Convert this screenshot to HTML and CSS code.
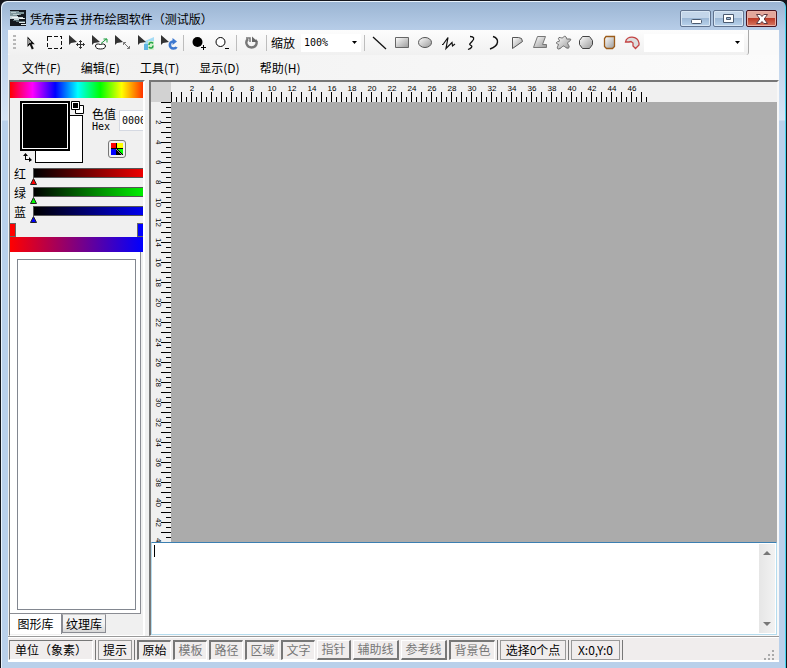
FILE: index.html
```html
<!DOCTYPE html>
<html lang="zh-CN">
<head>
<meta charset="utf-8">
<title>凭布青云 拼布绘图软件（测试版）</title>
<link rel="stylesheet" href="styles.css">
</head>
<body>
<div class="window">
  <header class="titlebar">
    <svg class="app-icon" width="16" height="16" viewBox="0 0 16 16" shape-rendering="crispEdges"><path fill="#15191f" d="M0 0h16v16H0z"/><path fill="#7f979b" d="M0 1h9v1h5v2h-3v1H7v1H0z"/><path fill="#b9cccd" d="M1 2h5v1H1zM3 4h6v1H3z"/><path fill="#c9d8d9" d="M0 6h8v1h5v1h2v1H9v1H4V9H0z"/><path fill="#f2f6f6" d="M2 7h6v1H2zM10 8h4v1h-4z"/><path fill="#5d7076" d="M3 10h6v1h6v2h-4v-1H6v-1H3z"/><path fill="#dfe7e8" d="M9 12h6v1H9zM11 14h5v1h-5z"/></svg>
    <h1 class="title">凭布青云 拼布绘图软件（测试版）</h1>
    <div class="caption-buttons">
      <button class="caption" aria-label="最小化"><svg width="12" height="12" viewBox="0 0 12 12"><rect x="1.500" y="6.500" width="10" height="4" rx="1" fill="#fff" stroke="#4b5a70"/></svg></button>
      <button class="caption" aria-label="最大化"><svg width="12" height="12" viewBox="0 0 12 12"><path fill="#fff" stroke="#4b5a70" fill-rule="evenodd" d="M.500 1.500h10v8H.500zM3.500 4.500h4v2h-4z"/></svg></button>
      <button class="caption close" aria-label="关闭"><svg width="14" height="12" viewBox="0 0 14 12"><path d="M1.500 1.500h3.700L7 3.500l1.800-2h3.700L9.200 6l3.300 4.500H8.800L7 8.500l-1.800 2H1.500L4.800 6z" fill="#fff" stroke="#5b3840"/></svg></button>
    </div>
  </header>

  <div class="client">
    <div class="toolbar-row">
      <div class="toolbar">
        <span class="grip"></span>
        <button class="tool" aria-label="选择"><svg viewBox="0 0 18 18"><path d="M5.500 2.500v10.500l2.300-2.200 2 4.700 2-1-2.100-4.300h3.100z" fill="#111"/><path d="M6.500 5v5M7.500 6v3M8.500 7v2" stroke="#999"/></svg></button>
        <button class="tool" aria-label="框选"><svg viewBox="0 0 18 18" shape-rendering="crispEdges"><path d="M2.500 2.500h14v12h-14z" fill="none" stroke="#111" stroke-dasharray="4 2"/></svg></button>
        <button class="tool" aria-label="移动"><svg viewBox="0 0 18 18"><path d="M1 1v10l2-2 6-1z" fill="#333"/><path d="M12.500 6.500v8M8.500 10.500h8M11 8l1.500-1.500L14 8M11 13l1.500 1.500L14 13M10 9l-1.500 1.500L10 12M15 9l1.500 1.500L15 12" fill="none" stroke="#333"/></svg></button>
        <button class="tool" aria-label="变形"><svg viewBox="0 0 18 18"><path d="M1 1v10l2-2 6-1z" fill="#333"/><path d="M4.500 12c0-2 2-2.500 5-1.500 2-1 5-.5 5 1.500s-2 3-5 3-5-1-5-3z" fill="#fff" stroke="#111"/><path d="M10 9.500L15.500 5m-3 0h3.500v3.500" fill="none" stroke="#159b38"/></svg></button>
        <button class="tool" aria-label="缩放对象"><svg viewBox="0 0 18 18"><path d="M1 1v10l2-2 6-1z" fill="#333"/><path d="M9.500 8.500l6 6M9.500 11V8.500H12M13 14.500h2.500V12" fill="none" stroke="#777"/></svg></button>
        <button class="tool" aria-label="翻转"><svg viewBox="0 0 18 18"><path d="M8 7l9-4v13H7z" fill="#a4dcf5"/><path d="M7 10h4v6H7z" fill="#5fb6e4"/><path d="M1 1v10l2-2 6-1z" fill="#333"/><path d="M11 7h6v9h-6z" fill="#d5f2cf"/><path d="M12 11c0-3 3-3 4-1.500M16 11.500c0 3-3 3-4 1.500" fill="none" stroke="#28a548" stroke-width="1.600"/></svg></button>
        <button class="tool" aria-label="旋转对象"><svg viewBox="0 0 18 18"><path d="M1 1v10l2-2 6-1z" fill="#333"/><path d="M13 7.500c-4 0-4.500 7 .5 7 1.500 0 2.500-.5 3-1.500" fill="none" stroke="#3d78cf" stroke-width="2.600"/><path d="M12.500 4l4.500 3.500-4.500 3.500z" fill="#3d78cf"/></svg></button>
        <span class="sep"></span>
        <button class="tool" aria-label="放大"><svg viewBox="0 0 18 18"><circle cx="7.500" cy="8" r="5"/><path d="M11 13.500h5M13.500 11v5" stroke="#000"/></svg></button>
        <button class="tool" aria-label="缩小"><svg viewBox="0 0 18 18"><circle cx="7.500" cy="8" r="4.500" fill="#fff" stroke="#000"/><path d="M12 14.500h4" stroke="#000"/></svg></button>
        <span class="sep"></span>
        <button class="tool" aria-label="重置"><svg viewBox="0 0 18 18"><path d="M5 5C1.500 8 4 13.500 8.500 13.500S15 9 12.500 6" fill="none" stroke="#777" stroke-width="2.400"/><path d="M9 2.500v5.500h6z" fill="#666"/><path d="M3 4h4v4" fill="none" stroke="#777" stroke-width="1.500"/></svg></button>
        <span class="sep"></span>
        <label class="zoom-label" for="zoom">缩放</label>
        <select class="combo zoom" id="zoom"><option>100%</option></select>
        <span class="sep"></span>
        <button class="tool" aria-label="直线"><svg viewBox="0 0 18 18"><path d="M2 3l13 12" stroke="#111" stroke-width="1.300"/></svg></button>
        <button class="tool" aria-label="矩形"><svg viewBox="0 0 18 18"><defs><linearGradient id="g" x1="0" y1="0" x2="1" y2="1"><stop stop-color="#fff"/><stop offset="1" stop-color="#999"/></linearGradient></defs><path d="M1.500 3.500h13v10h-13z" fill="url(#g)" stroke="#666"/></svg></button>
        <button class="tool" aria-label="椭圆"><svg viewBox="0 0 18 18"><ellipse cx="8" cy="8.500" rx="6.500" ry="5" fill="url(#g)" stroke="#555"/></svg></button>
        <button class="tool" aria-label="折线"><svg viewBox="0 0 18 18"><path d="M2 10.500h1L8 3.500l-2 11 6-6 .5 3.500 2.500-2" fill="none" stroke="#111" stroke-width="1.200"/></svg></button>
        <button class="tool" aria-label="曲线"><svg viewBox="0 0 18 18"><path d="M7 2.500c4 0 5 2 2 5s-3 3-1 4 0 3-3 4" fill="none" stroke="#111" stroke-width="1.300"/></svg></button>
        <button class="tool" aria-label="弧线"><svg viewBox="0 0 18 18"><path d="M7 2.500c6 2 7 9-3 12.500" fill="none" stroke="#111" stroke-width="1.400"/></svg></button>
        <button class="tool" aria-label="扇形"><svg viewBox="0 0 18 18"><path d="M3.500 3.500h6l3 1 1 3-10 7z" fill="url(#g)" stroke="#555"/></svg></button>
        <button class="tool" aria-label="多边形"><svg viewBox="0 0 18 18"><path d="M5.500 2.500h8l-3 8h4v3h-13z" fill="url(#g)" stroke="#777"/></svg></button>
        <button class="tool" aria-label="曲边形"><svg viewBox="0 0 18 18"><path d="M4 3.500c2 0 3 1 4 0s2-2 3-.5 0 2 1 2h3.500c1 2-3 3-3 4s3 4 1 5-4-2-5-2-3 3-5 3-1-3 0-4-3-1-2-2.500 3-.5 3-1.500-2-2.500-.5-3.500z" fill="url(#g)" stroke="#666"/></svg></button>
        <button class="tool" aria-label="正多边形"><svg viewBox="0 0 18 18"><path d="M4.500 2.500h7l3 4v4l-3 4h-7l-3-4v-4z" fill="url(#g)" stroke="#444"/></svg></button>
        <button class="tool" aria-label="圆角矩形"><svg viewBox="0 0 18 18"><path d="M5 2.500h8.500v10l-2 2h-6l-2-2v-8z" fill="url(#g)" stroke="#9b5b19" stroke-width="1.300"/></svg></button>
        <button class="tool" aria-label="扇环"><svg viewBox="0 0 18 18"><path d="M1.500 8c1-6.500 12-7 13.500 1v2l-3.500 3.500-2.500-2.500V9L7 7.500 5 8z" fill="#ddd" stroke="#c44343" stroke-width="1.300"/></svg></button>
        <select class="combo style" aria-label="线型"><option></option></select>
      </div>
    </div>
    <nav class="menu">
      <button>文件(F)</button><button>编辑(E)</button><button>工具(T)</button><button>显示(D)</button><button>帮助(H)</button>
    </nav>

    <main class="main">
      <aside class="side">
        <div class="hue"></div>
        <div class="picker">
          <div class="swatches">
            <span class="swatch back"></span>
            <span class="swatch front"></span>
            <svg class="default" width="13" height="13" viewBox="0 0 13 13"><path d="M4.500 4.500h8v8h-8z" fill="#fff" stroke="#000"/><path d="M.500.500h8v8h-8z" fill="#fff" stroke="#000"/><path d="M2 2h5v5H2z"/></svg>
            <svg class="swap" width="9" height="9" viewBox="0 0 9 9"><path d="M2.500 0L5 3H3v3h3V4l3 3-3 2V7H2V3H0z"/></svg>
          </div>
          <div class="hex">
            <label class="hex-label" for="hex"><span>色值</span><span class="hex-word">Hex</span></label>
            <input id="hex" class="hex-input" value="000000">
            <button class="palette" aria-label="调色板"><svg width="12" height="12" viewBox="0 0 12 12" shape-rendering="crispEdges"><path d="M0 0h12v12H0z"/><path fill="#f00" d="M0 0h5v5H0z"/><path fill="#ff0" d="M6 0h6v5H6z"/><path fill="#00f" d="M0 6h5v6H0z"/><path fill="#0f0" d="M6 6h6v6z"/><path fill="#999" d="M4 6h2l5 6z"/></svg></button>
          </div>
        </div>
        <div class="channels">
          <div class="channel"><span>红</span><div class="track red"></div><svg class="thumb" viewBox="0 0 7 7"><path d="M3.500.5l3 6h-6z" fill="red" stroke="#222"/></svg></div>
          <div class="channel"><span>绿</span><div class="track green"></div><svg class="thumb" viewBox="0 0 7 7"><path d="M3.500.5l3 6h-6z" fill="#0f0" stroke="#222"/></svg></div>
          <div class="channel"><span>蓝</span><div class="track blue"></div><svg class="thumb" viewBox="0 0 7 7"><path d="M3.500.5l3 6h-6z" fill="#00f" stroke="#222"/></svg></div>
        </div>
        <div class="stops"><span class="stop first"></span><span class="stop last"></span></div>
        <div class="blend"></div>
        <div class="library"><div class="library-list"></div></div>
        <div class="tabs"><button class="tab active">图形库</button><button class="tab">纹理库</button></div>
      </aside>

      <section class="work">
        <div class="corner"></div>
        <div class="ruler-x"><span>2</span><span>4</span><span>6</span><span>8</span><span>10</span><span>12</span><span>14</span><span>16</span><span>18</span><span>20</span><span>22</span><span>24</span><span>26</span><span>28</span><span>30</span><span>32</span><span>34</span><span>36</span><span>38</span><span>40</span><span>42</span><span>44</span><span>46</span></div>
        <div class="ruler-y"><span>2</span><span>4</span><span>6</span><span>8</span><span>10</span><span>12</span><span>14</span><span>16</span><span>18</span><span>20</span><span>22</span><span>24</span><span>26</span><span>28</span><span>30</span><span>32</span><span>34</span><span>36</span><span>38</span><span>40</span><span>42</span><span>44</span></div>
        <div class="canvas"></div>
        <div class="console">
          <textarea class="log" aria-label="信息"></textarea>
          <span class="caret"></span>
          <div class="scroll"><svg width="8" height="4" viewBox="0 0 8 4"><path d="M0 4l4-4 4 4z" fill="#777"/></svg><svg width="8" height="4" viewBox="0 0 8 4"><path d="M0 0l4 4 4-4z" fill="#777"/></svg></div>
        </div>
      </section>
    </main>

    <footer class="status">
      <span class="cell unit">单位（象素）</span><span class="bar"></span>
      <button class="cell">提示</button><span class="bar"></span>
      <div class="toggles">
        <button class="toggle down on">原始</button><button class="toggle down">模板</button><button class="toggle down">路径</button><button class="toggle down">区域</button><button class="toggle down">文字</button><button class="toggle">指针</button><button class="toggle wide">辅助线</button><button class="toggle wide">参考线</button><button class="toggle wide down">背景色</button>
      </div>
      <span class="bar"></span><span class="cell count">选择0个点</span><span class="bar"></span>
      <span class="cell coords">X:0,Y:0</span><span class="bar"></span>
      <svg class="size-grip" width="12" height="12" viewBox="0 0 12 12"><path fill="#aaa" d="M8 0h2v2H8zM4 4h2v2H4zM8 4h2v2H8zM0 8h2v2H0zM4 8h2v2H4zM8 8h2v2H8z"/></svg>
    </footer>
  </div>
</div>
</body>
</html>
```
FILE: styles.css
```css
* { box-sizing: border-box; }
body {
  margin: 0;
  background: #15161c;
  color: #000;
  font: 12px/16px "Noto Sans CJK SC", sans-serif;
}
button, select, input, textarea {
  margin: 0;
  padding: 0;
  border: 0;
  border-radius: 0;
  background: none;
  color: inherit;
  font: inherit;
}
svg { display: block; }

.window {
  display: flex;
  flex-direction: column;
  height: 100vh;
  padding: 0 8px 6px 7px;
  border: 1px solid #15161c;
  border-bottom: 0;
  border-radius: 7px 7px 0 0;
  background: linear-gradient(#9ab4d2 0, #b7cde8 29px, #d5e4f4 119px, #b9d0ea 120px);
  box-shadow: inset 1px 1px #e8f2fb, inset -1px 0 #45d3ee;
}
.titlebar {
  display: flex;
  flex: 0 0 29px;
  align-items: flex-start;
  padding: 9px 1px 0 2px;
}
.title {
  flex: 1;
  margin: 1px 0 0 4px;
  font-size: 12px;
  font-weight: 400;
  line-height: 16px;
}
.caption-buttons { display: flex; gap: 2px; }
.caption {
  display: flex;
  align-items: center;
  justify-content: center;
  width: 31px;
  height: 17px;
  border: 1px solid #61738f;
  border-radius: 2px;
  background: linear-gradient(#c4d6ea 0 45%, #9db8d6 50%, #b9d3ec);
  box-shadow: inset 0 0 0 1px #d8e6f4;
}
.caption.close {
  border-color: #4a1420;
  background: linear-gradient(#e3a79b 0 45%, #bd3a26 50%, #d77862);
  box-shadow: inset 0 0 0 1px #e9b0a5;
}

.client {
  display: flex;
  flex: 1;
  flex-direction: column;
  min-height: 0;
  margin-right: -1px;
  background: #f0f0f0;
}
.toolbar-row { flex: 0 0 25px; background: #fafafa; }
.toolbar {
  display: flex;
  align-items: center;
  width: 741px;
  height: 25px;
  padding-left: 5px;
  border-right: 1px solid #aaa;
  border-radius: 0 0 3px 3px;
  background: linear-gradient(#fdfdfd, #f0f0f0);
}
.grip {
  width: 3px;
  height: 15px;
  margin-right: 3px;
  background: repeating-linear-gradient(#b8b8b8 0 2px, transparent 2px 4px);
}
.tool {
  display: flex;
  flex: none;
  align-items: center;
  justify-content: center;
  width: 23px;
  height: 23px;
}
.tool svg { width: 18px; height: 18px; }
.sep {
  flex: none;
  width: 1px;
  height: 16px;
  margin: 0 3px;
  background: #bdbdbd;
}
.zoom-label { width: 31px; padding-left: 1px; white-space: nowrap; }
.combo {
  flex: none;
  height: 18px;
  appearance: none;
  background: url("data:image/svg+xml,%3Csvg xmlns='http://www.w3.org/2000/svg' width='5' height='3'%3E%3Cpath d='M0 0h5L2.500 3z'/%3E%3C/svg%3E") right 4px center no-repeat #fff;
}
.zoom { width: 60px; padding-left: 3px; font: 10px/16px "DejaVu Sans Mono", monospace; }
.style { width: 100px; }

.menu {
  display: flex;
  flex: 0 0 25px;
  gap: 20px;
  align-items: center;
  padding-left: 14px;
  background: linear-gradient(90deg, #f0f0f0, #fbfbfb);
}

.main { display: flex; flex: 1; min-height: 0; }
.side {
  display: flex;
  flex: 0 0 136px;
  flex-direction: column;
  overflow: hidden;
  border: 1px solid #777;
  border-top: 2px solid #777;
  border-right: 2px solid #fff;
  border-bottom-color: #fff;
  margin: 0 4px 0 1px;
}
.hue {
  flex: 0 0 16px;
  background: linear-gradient(90deg, #f00, #f0f 17%, #00f 34%, #0ff 51%, #0f0 68%, #ff0 84%, #f30);
}
.picker { display: flex; flex: 0 0 68px; }
.swatches { position: relative; flex: 0 0 82px; }
.swatch { position: absolute; border: 1px solid #000; }
.swatch.back { top: 17px; left: 25px; width: 48px; height: 48px; background: #fff; }
.swatch.front {
  top: 3px;
  left: 10px;
  width: 50px;
  height: 50px;
  border-width: 2px;
  background: #000;
  box-shadow: inset 0 0 0 1px #fff;
}
.default { position: absolute; top: 3px; left: 61px; }
.swap { position: absolute; top: 55px; left: 13px; }
.hex {
  display: grid;
  flex: none;
  grid-template-columns: 27px 60px;
  grid-template-rows: 34px 20px;
  padding-top: 8px;
}
.hex-label { display: flex; flex-direction: column; line-height: 16px; }
.hex-word { font: 10px/10px "DejaVu Sans Mono", monospace; }
.hex-input {
  width: 60px;
  height: 21px;
  margin-top: 4px;
  padding-left: 2px;
  border: 1px solid #d5d9e2;
  background: #fff;
  font: 10px/16px "DejaVu Sans Mono", monospace;
}
.palette {
  display: flex;
  grid-column: 1 / 3;
  align-items: center;
  justify-content: center;
  width: 18px;
  height: 18px;
  margin-left: 16px;
  border: 1px solid #777;
  border-radius: 3px;
}
.channels { flex: 0 0 57px; padding-left: 4px; }
.channel {
  display: grid;
  grid-template-columns: 19px 1fr;
  grid-template-rows: 12px 7px;
}
.channel span { grid-row: 1 / 3; line-height: 16px; }
.track { height: 10px; margin-top: 2px; border: 1px solid #555; border-right: 0; }
.track.red { background: linear-gradient(90deg, #000, #e00); }
.track.green { background: linear-gradient(90deg, #000, #0e0); }
.track.blue { background: linear-gradient(90deg, #000, #00e); }
.thumb { width: 7px; height: 7px; margin-left: -3px; }
.stops { display: flex; flex: 0 0 14px; justify-content: space-between; }
.stop { width: 6px; border: 1px solid #666; }
.stop.first { border-left: 0; background: #f00; }
.stop.last { border-right: 0; background: #00f; }
.blend { flex: 0 0 15px; background: linear-gradient(90deg, #f00, #00f); }
.library {
  flex: 1;
  min-height: 0;
  margin-right: 2px;
  padding: 7px 4px 3px 7px;
  border-right: 1px solid #8a8c93;
  border-bottom: 1px solid #8a8c93;
  background: #fff;
}
.library-list { height: 100%; border: 1px solid #828790; }
.tabs { display: flex; flex: 0 0 21px; align-items: flex-start; }
.tab {
  width: 44px;
  height: 19px;
  border: 1px solid #8a8c93;
  border-top: 1px solid #ccc;
  background: linear-gradient(#f3f3f3 50%, #d8d8d8);
  line-height: 14px;
}
.tab.active { width: 52px; height: 20px; border-width: 0 1px 0 0; background: #fff; }

.work {
  display: grid;
  flex: 1;
  grid-template-columns: 20px 1fr;
  grid-template-rows: 20px minmax(0, 1fr) 93px;
  min-width: 0;
  border: 2px solid #777;
  border-right-color: #f8f8f8;
  border-bottom: 1px solid #f8f8f8;
}
.corner { background: #d2d2d2; }
.ruler-x, .ruler-y { display: flex; overflow: hidden; font: 8px/10px "Liberation Sans", sans-serif; }
.ruler-x {
  padding: 2px 0 0 11px;
  background:
    repeating-linear-gradient(90deg, #000 0 1px, transparent 1px 10px) 0 10px / 476px 10px no-repeat,
    repeating-linear-gradient(90deg, #000 0 1px, transparent 1px 5px) 0 15px / 476px 5px no-repeat,
    #f0f0f0;
}
.ruler-x span { flex: 0 0 20px; text-align: center; }
.ruler-y {
  flex-direction: column;
  padding: 10px 0 0 2px;
  background:
    repeating-linear-gradient(#000 0 1px, transparent 1px 10px) 10px 0 / 10px 100% no-repeat,
    repeating-linear-gradient(#000 0 1px, transparent 1px 5px) 15px 0 / 5px 100% no-repeat,
    #f0f0f0;
}
.ruler-y span { flex: 0 0 20px; width: 10px; text-align: center; writing-mode: vertical-rl; }
.canvas { background: #ababab; }
.console {
  position: relative;
  display: flex;
  grid-column: 1 / 3;
  border: 1px solid #b5dcee;
  border-top-color: #3c7fb1;
  background: #fff;
}
.log { flex: 1; padding: 2px; outline: 0; resize: none; overflow: hidden; }
.caret { position: absolute; top: 2px; left: 2px; width: 1px; height: 12px; background: #000; }
.scroll {
  display: flex;
  flex: 0 0 16px;
  flex-direction: column;
  align-items: center;
  justify-content: space-between;
  margin: 1px;
  padding: 7px 0;
  background: linear-gradient(90deg, #e6e6e6, #f2f2f2);
}

.status {
  display: flex;
  flex: 0 0 26px;
  gap: 2px;
  align-items: center;
  padding: 0 3px 0 1px;
  border-top: 1px solid #999;
  background: #f0eded;
  box-shadow: inset 0 1px #fff, inset 0 -2px #fff;
}
.cell, .toggle {
  flex: none;
  height: 20px;
  line-height: 18px;
  text-align: center;
  white-space: nowrap;
}
.toggle { line-height: 16px; }
.cell { width: 34px; border: 1px solid #999; }
.cell.unit { width: 84px; border-color: #777 #fff #fff #777; }
.cell.count { width: 66px; }
.cell.coords { width: 49px; }
.bar { flex: none; width: 1px; height: 20px; background: #777; }
.toggles { display: flex; gap: 2px; }
.toggle {
  width: 34px;
  border: 1px solid #fff;
  border-right: 2px solid #777;
  border-bottom: 2px solid #777;
  color: #777;
}
.toggle.down { border: 2px solid #777; border-right: 1px solid #fff; border-bottom: 1px solid #fff; }
.toggle.wide { width: 46px; }
.toggle.on { color: #000; }
.size-grip { align-self: flex-end; margin-left: auto; }
```
